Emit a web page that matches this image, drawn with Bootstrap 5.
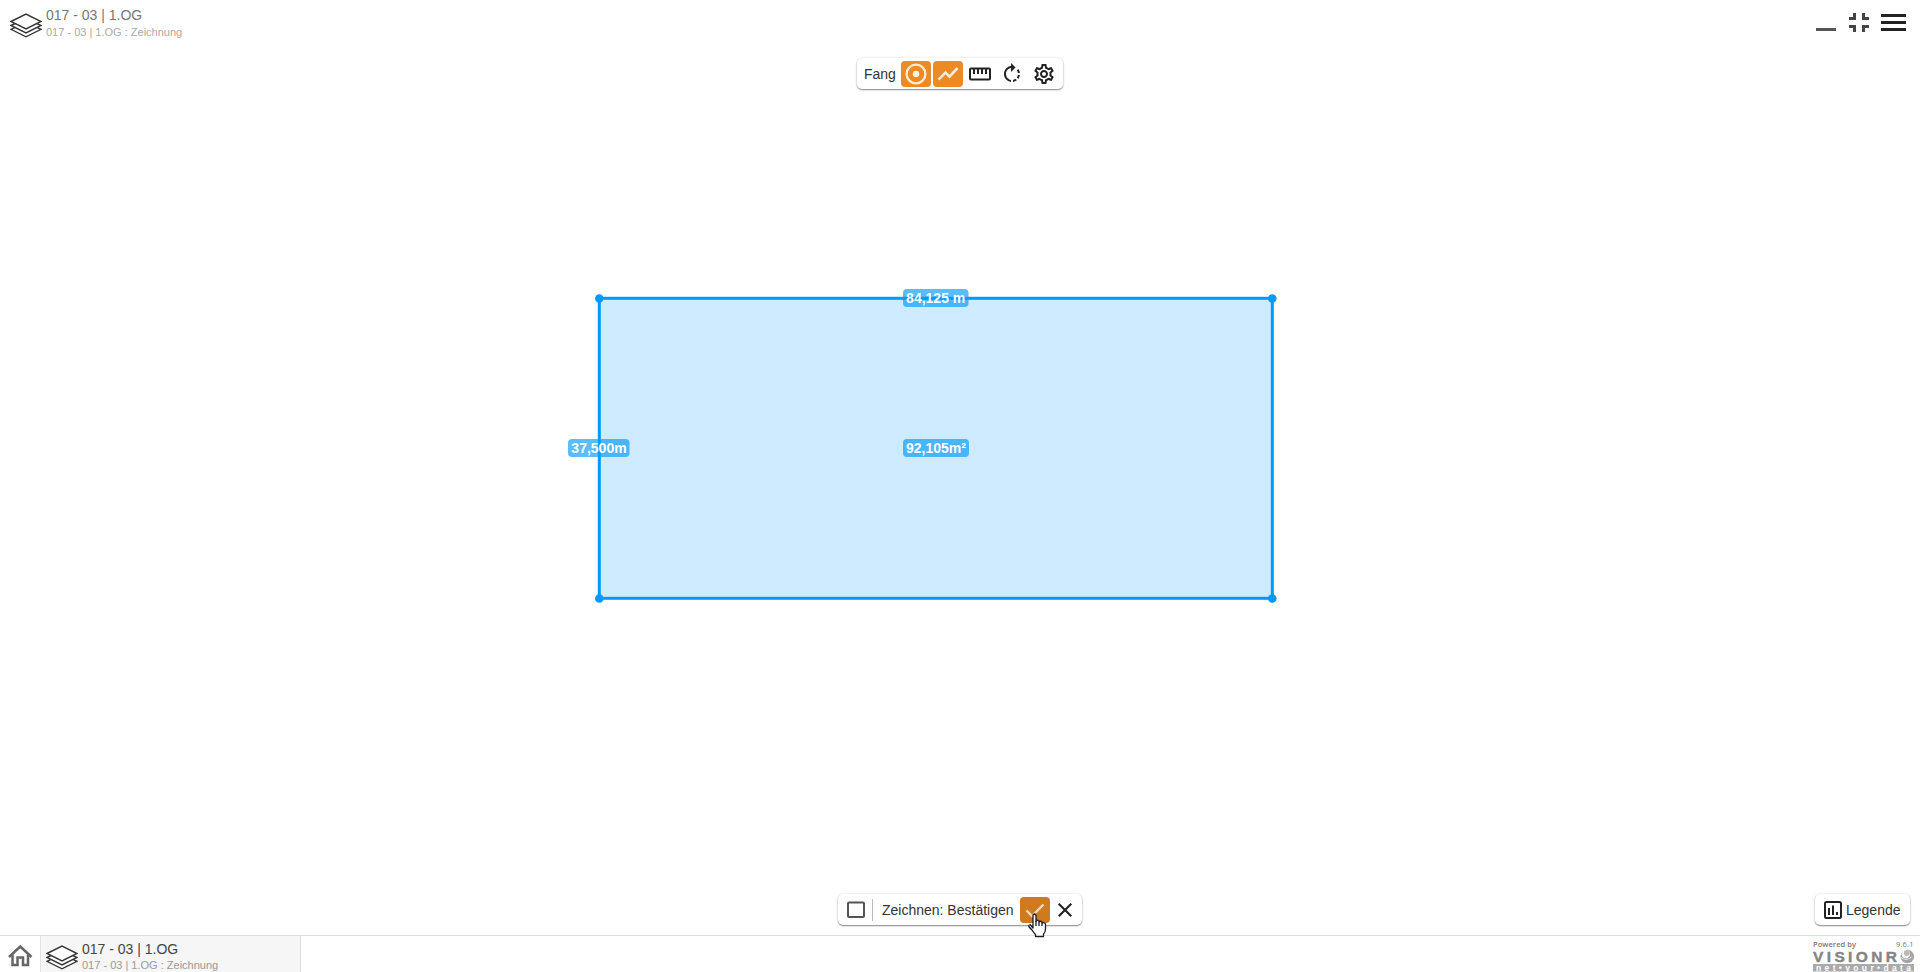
<!DOCTYPE html>
<html lang="de">
<head>
<meta charset="utf-8">
<title>017 - 03 | 1.OG</title>
<meta name="viewport" content="width=device-width, initial-scale=1">
<link href="https://cdn.jsdelivr.net/npm/bootstrap@5.3.0/dist/css/bootstrap.min.css" rel="stylesheet">
<style>
body{font-family:"Liberation Sans",Arial,sans-serif;font-size:14px;line-height:16px;color:#333;background:#fff}
svg{display:block;flex:none}
.topbar{height:50px;padding:0 9px 0 9px}
.layers-icon{margin:13px 4px 0 1px}
.ttl{font-size:14px;line-height:16px;color:#777}
.subttl{font-size:11px;line-height:13px;color:#aaa}
.floatbar{background:#fff;color:#333;border-radius:5px;height:31px;box-shadow:0 1px 1.500px rgba(0,0,0,.45),0 0 3px rgba(0,0,0,.1)}
.tool{width:30px;height:26px;border-radius:4px;padding:0;border:0;background:transparent;display:flex;align-items:center;justify-content:center}
.tool.active{background:#ec8b25}
.tool.confirm{background:#d07a1e}
.snapbar{width:206px;margin:8px 0 0 857px;padding-left:7px;gap:2px}
.snapbar-label{width:35px}
.bottombar{height:41px}
.drawbar{width:244px;margin-left:838px;padding-left:9px}
.sep{width:1px;height:22px;background:#bbb}
.draw-label{margin-left:9px;width:138px}
.legendbar{width:95px;margin-right:10px;padding-left:9px}
.cursor{left:1027px;top:912px}
.taskbar{height:37px;border-top:1px solid #ddd}
.tab{width:261px;background:#f6f6f6;border-right:1px solid #ddd;border-left:1px solid #e2e2e2;padding-left:4px}
.tab .ttl{color:#444}.tab .subttl{color:#999}
.dim{font:bold 14px "Liberation Sans",Arial,sans-serif;fill:#fff;text-anchor:middle}
</style>
</head>
<body class="d-flex flex-column vh-100 overflow-hidden position-relative">
<svg width="0" height="0" class="position-absolute"><defs>
<symbol id="layers" viewBox="0 0 32 25"><g fill="#fff" stroke="#333" stroke-width="1.400"><path d="M1 16.300L16 9L31 16.300L16 23.800Z"/><path d="M1 12.500L16 5L31 12.500L16 20Z"/><path d="M1 8.500L16 1L31 8.500L16 16Z"/></g></symbol>
</defs></svg>

<header class="topbar d-flex">
  <svg class="layers-icon" width="32" height="25"><use href="#layers"/></svg>
  <div style="padding-top:7px"><div class="ttl">017 - 03 | 1.OG</div><div class="subttl" style="padding-top:3px">017 - 03 | 1.OG : Zeichnung</div></div>
  <div class="ms-auto d-flex">
    <svg width="100" height="40" viewBox="1811 0 100 40" shape-rendering="crispEdges"><path fill="#555" d="M1816 28h20v3h-20z"/><path fill="#444" d="M1853 13h3v7h-7v-3h4zM1862 13h3v4h4v3h-7zM1849 25h7v7h-3v-4h-4zM1862 25h7v3h-4v4h-3z"/><path fill="#222" d="M1881 14h25v3h-25zM1881 21h25v3h-25zM1881 28h25v3h-25z"/></svg>
  </div>
</header>

<main class="flex-grow-1 position-relative">
  <nav class="floatbar snapbar d-flex align-items-center">
    <span class="snapbar-label">Fang</span>
    <button class="tool active" aria-label="Punktfang"><svg width="24" height="24" fill="none" stroke="#fdecd5" stroke-width="2.300"><circle cx="12" cy="12" r="9.400"/><circle cx="12" cy="12" r="3.200" fill="#fff3e2" stroke="none"/></svg></button>
    <button class="tool active" aria-label="Linienfang"><svg width="24" height="24" fill="none" stroke="#fdecd5" stroke-width="2.600"><path d="M2.500 17.700L9.500 10.700L13.500 14.700L21.500 6"/></svg></button>
    <button class="tool" aria-label="Lineal"><svg width="24" height="24" fill="none" stroke="#222" stroke-width="2"><rect x="2" y="6.500" width="20" height="11" rx="1"/><path d="M6 7v5M10 7v5M14 7v5M18 7v5"/></svg></button>
    <button class="tool" aria-label="Drehen"><svg width="24" height="24" viewBox="0 0 24 24" fill="#222"><path d="M15.550 5.550L11 1v3.070C7.060 4.560 4 7.920 4 12s3.050 7.440 7 7.930v-2.020c-2.840-.48-5-2.940-5-5.910s2.160-5.430 5-5.910V10l4.550-4.450zM19.930 11c-.17-1.390-.72-2.730-1.620-3.890l-1.420 1.420c.54.75.88 1.600 1.020 2.470h2.020zM13 17.900v2.020c1.390-.17 2.740-.71 3.900-1.610l-1.440-1.440c-.75.54-1.590.89-2.460 1.030zM16.890 15.480l1.420 1.410c.9-1.160 1.450-2.500 1.620-3.890h-2.020c-.14.870-.48 1.720-1.020 2.480z"/></svg></button>
    <button class="tool" aria-label="Einstellungen"><svg width="24" height="24" viewBox="0 0 24 24" fill="#222"><path d="M19.430 12.980c.04-.32.070-.64.070-.98 0-.34-.03-.66-.07-.98l2.110-1.650c.19-.15.240-.42.120-.64l-2-3.460c-.09-.16-.26-.25-.44-.25-.06 0-.12.010-.17.030l-2.490 1c-.52-.4-1.080-.73-1.690-.98l-.38-2.650C14.460 2.180 14.250 2 14 2h-4c-.25 0-.46.180-.49.420l-.38 2.650c-.61.250-1.170.59-1.690.98l-2.490-1c-.06-.02-.12-.03-.18-.03-.17 0-.34.090-.43.250l-2 3.460c-.13.220-.07.490.120.640l2.110 1.650c-.04.320-.07.650-.07.980 0 .33.030.66.070.98l-2.110 1.650c-.19.150-.24.420-.12.640l2 3.460c.09.160.26.250.44.250.06 0 .12-.01.170-.03l2.490-1c.52.400 1.080.73 1.690.98l.38 2.650c.03.240.24.420.49.420h4c.25 0 .46-.18.490-.42l.38-2.650c.61-.25 1.170-.59 1.690-.98l2.490 1c.06.020.12.030.18.030.17 0 .34-.09.430-.25l2-3.460c.12-.22.070-.49-.12-.64l-2.110-1.650zm-1.980-1.710c.04.310.05.520.05.730 0 .21-.02.430-.05.730l-.14 1.130.89.700 1.080.84-.7 1.210-1.270-.51-1.040-.42-.9.680c-.43.320-.84.560-1.250.73l-1.060.43-.16 1.130-.2 1.350h-1.400l-.19-1.350-.16-1.130-1.060-.43c-.43-.18-.83-.41-1.230-.71l-.91-.7-1.060.43-1.270.51-.7-1.210 1.080-.84.890-.7-.14-1.130c-.03-.31-.05-.54-.05-.74s.02-.43.050-.73l.14-1.130-.89-.7-1.080-.84.7-1.210 1.270.51 1.040.42.9-.68c.43-.32.84-.56 1.250-.73l1.060-.43.160-1.130.2-1.350h1.390l.19 1.350.16 1.130 1.060.43c.43.180.83.410 1.230.71l.91.700 1.060-.43 1.270-.51.7 1.210-1.070.85-.89.700.14 1.130zM12 8c-2.210 0-4 1.790-4 4s1.790 4 4 4 4-1.790 4-4-1.790-4-4-4zm0 6c-1.100 0-2-.9-2-2s.9-2 2-2 2 .9 2 2-.9 2-2 2z"/></svg></button>
  </nav>
  <!-- drawing canvas: outline, handles and measurements -->
  <svg class="position-absolute" style="left:560px;top:230px" width="750" height="390" viewBox="560 280 750 390">
    <rect x="599.300" y="298.300" width="673" height="300" fill="#cfebff" stroke="#0099ff" stroke-width="3"/>
    <g fill="#0099ff"><circle cx="599.300" cy="298.500" r="4.300"/><circle cx="1272.300" cy="298.500" r="4.300"/><circle cx="599.300" cy="598.500" r="4.300"/><circle cx="1272.300" cy="598.500" r="4.300"/></g>
    <g fill="#0099ff" fill-opacity=".65"><rect x="903" y="289" width="65.500" height="18" rx="4"/><rect x="568" y="439" width="61.500" height="18" rx="4"/><rect x="903" y="439" width="66" height="18" rx="4"/></g>
    <text class="dim" x="935.700" y="303">84,125 m</text><text class="dim" x="599" y="453">37,500m</text><text class="dim" x="936" y="453">92,105m²</text>
  </svg>
</main>

<div class="bottombar d-flex">
  <div class="floatbar drawbar d-flex align-items-center">
    <svg width="18" height="18" style="margin-right:7px"><rect x="1" y="1.500" width="16" height="14.500" rx="1" fill="#fff" stroke="#555" stroke-width="2"/></svg>
    <i class="sep"></i><span class="draw-label text-nowrap">Zeichnen: Bestätigen</span>
    <button class="tool confirm" aria-label="Bestätigen"><svg width="24" height="24" fill="none" stroke="#f1dcc2" stroke-width="2.400"><path d="M3.500 12.500L9 18L20.500 6.500"/></svg></button>
    <button class="tool" aria-label="Abbrechen"><svg width="24" height="24" stroke="#222" stroke-width="2.100"><path d="M5.700 5.700L18.300 18.300M18.300 5.700L5.700 18.300"/></svg></button>
  </div>
  <button class="floatbar legendbar border-0 ms-auto d-flex align-items-center">
    <svg width="18" height="18" style="margin-right:4px" fill="none" stroke="#222" stroke-width="2"><rect x="1" y="1" width="16" height="16" rx="1.500"/><path d="M5 7v7M9 4.500v9.500M13 11v3"/></svg>
    <span>Legende</span>
  </button>
</div>

<footer class="taskbar d-flex">
  <svg width="40" height="36" viewBox="0 936 40 36" fill="none" stroke="#666" stroke-width="2.500"><path d="M9 957L20.300 946.500L31.500 957"/><path d="M12.500 954.500V965H17.500V957.500H23V965H28V954.500"/></svg>
  <div class="tab d-flex"><svg width="32" height="25" style="margin:9px 4px 0 1px"><use href="#layers"/></svg>
    <div style="padding-top:5px"><div class="ttl">017 - 03 | 1.OG</div><div class="subttl" style="padding-top:2px">017 - 03 | 1.OG : Zeichnung</div></div></div>
  <svg class="ms-auto" style="margin-right:4px" width="106" height="36" viewBox="1810 936 106 36">
    <g font-family="Open Sans,sans-serif" font-size="7.500" fill="#777"><text x="1813" y="947" font-weight="600" textLength="43">Powered by</text><text x="1896" y="947" textLength="17.500">9.6.1</text></g>
    <text x="1813" y="962" font-family="Liberation Sans,Arial,sans-serif" font-weight="bold" font-size="15.500" fill="#858585" stroke="#858585" stroke-width=".4" textLength="84" lengthAdjust="spacing">VISIONR</text>
    <circle cx="1907.300" cy="956.500" r="6.800" fill="#a5a5a5"/><circle cx="1905.800" cy="953.900" r="4.300" fill="#fff"/><circle cx="1906.800" cy="953" r="3" fill="#bbb"/><path d="M1901 957.500Q1906 961.500 1911.500 957" fill="none" stroke="#e8e8e8" stroke-width="1"/>
    <rect x="1813" y="964" width="101" height="7.500" fill="#aaa"/><text x="1816" y="970.500" font-family="Liberation Sans,Arial,sans-serif" font-size="8.500" font-weight="bold" fill="#fff" textLength="95" lengthAdjust="spacing">net•your•data</text>
  </svg>
</footer>

<svg class="cursor position-absolute" width="21" height="26" viewBox="0 0 21 26" fill="#fff" stroke="#1b1b2b" stroke-width="1.300" stroke-linejoin="round"><path d="M6 16V3.500Q6 2 7.500 2T9 3.500V9.500V8.500Q10.500 7.500 12 9V10Q13.500 8.500 15 10V11Q17.500 10 18.500 12V17Q18.500 20 16.500 22V24.500H8.500V22.500Q6 20 5 18Q3 16 1.800 14.500Q1.500 12.500 3.500 13Z"/><path d="M9 9v5M12 10v4M15 11v3" fill="none"/></svg>
<script src="https://cdn.jsdelivr.net/npm/bootstrap@5.3.0/dist/js/bootstrap.bundle.min.js"></script>
</body>
</html>
